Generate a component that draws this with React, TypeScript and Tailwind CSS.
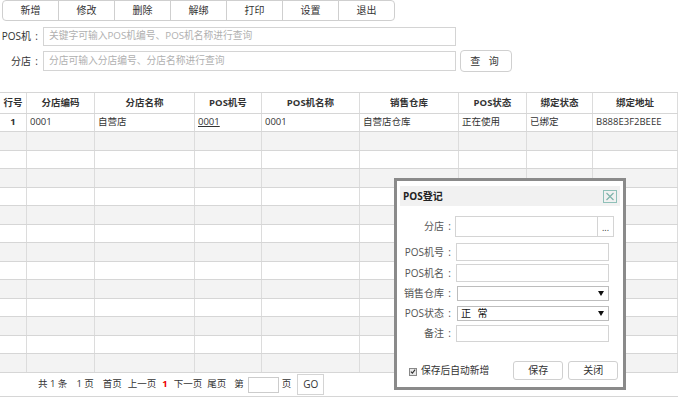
import React from 'react';

const FONT = '"Open Sans", "Noto Sans CJK SC", sans-serif';

const toolbar = ['新增', '修改', '删除', '解绑', '打印', '设置', '退出'];

const headers = ['行号', '分店编码', '分店名称', 'POS机号', 'POS机名称', '销售仓库', 'POS状态', '绑定状态', '绑定地址'];

const firstRow = ['0001', '自营店', '0001', '0001', '自营店仓库', '正在使用', '已绑定', 'B888E3F2BEEE'];

const rowHeights = Array.from({ length: 14 }, (_, i) => (i % 2 === 0 ? 18 : 19));

const GRID = 'grid grid-cols-[27px_68px_100px_67px_98px_99px_68px_66px_85px]';

// full-width colon, centred like the YaHei one in the picture
function Colon() {
  return <span className="inline-block w-[11px] text-center">:</span>;
}

function Arrow() {
  return (
    <svg width="6" height="5" viewBox="0 0 6 5" className="mr-[4px]">
      <path d="M0 0 H6 L3 5 Z" fill="#111" />
    </svg>
  );
}

function FormRow({ label, children, className }: { label: string; children: React.ReactNode; className: string }) {
  return (
    <div className={`flex items-center ${className}`}>
      <span className="w-[55px] text-right text-[#555] whitespace-nowrap">
        {label}
        <Colon />
      </span>
      {children}
    </div>
  );
}

export default function App() {
  return (
    <div className="relative w-[678px] h-[400px] overflow-hidden bg-white text-[10px] text-[#333]" style={{ fontFamily: FONT }}>
      {/* Toolbar */}
      <div className="flex pl-[2px] h-[21px]">
        {toolbar.map((t, i) => (
          <button
            key={t}
            className={`w-[57px] h-[21px] border border-[#cfcfcf] bg-white text-[10px] text-[#333] ${i > 0 ? '-ml-px' : 'rounded-l-[4px]'} ${i === toolbar.length - 1 ? 'rounded-r-[4px]' : ''}`}
          >
            {t}
          </button>
        ))}
      </div>

      {/* Search */}
      <div className="flex items-center mt-[6px] h-[19px]">
        <span className="w-[42px] text-right text-[#333] whitespace-nowrap">
          POS机<Colon />
        </span>
        <div className="ml-[1px] w-[413px] h-[19px] border border-[#d4d4d4] flex items-center pl-[5px] text-[9.75px] text-[#b0b0b0]">
          关键字可输入POS机编号、POS机名称进行查询
        </div>
      </div>
      <div className="flex items-center mt-[4px] h-[22px]">
        <span className="w-[42px] text-right text-[#333] whitespace-nowrap">
          分店<Colon />
        </span>
        <div className="ml-[1px] w-[413px] h-[20px] border border-[#d4d4d4] flex items-center pl-[5px] text-[9.75px] text-[#b0b0b0]">
          分店可输入分店编号、分店名称进行查询
        </div>
        <button className="ml-[4px] w-[52px] h-[22px] border border-[#d0d0d0] rounded-[4px] bg-white text-[10px] text-[#333] tracking-[3px]">
          查 询
        </button>
      </div>

      {/* Table */}
      <div className="mt-[20px] text-[9.5px]">
        <div className={`${GRID} h-[22px] border-t border-b border-[#d6d6d6] font-bold text-[#333]`}>
          {headers.map((h) => (
            <div key={h} className="flex items-center justify-center border-r border-[#dcdcdc]">
              {h}
            </div>
          ))}
        </div>
        {rowHeights.map((h, r) => (
          <div
            key={r}
            className={`${GRID} border-b border-[#d6d6d6] ${h === 18 ? 'h-[18px]' : 'h-[19px]'} ${r % 2 === 1 ? 'bg-[#f3f3f3]' : 'bg-white'}`}
          >
            {headers.map((_, c) => (
              <div
                key={c}
                className={`flex items-center border-r border-[#dcdcdc] ${c === 0 ? 'justify-center font-bold' : 'pl-[3px]'}`}
              >
                {r === 0 && (c === 0 ? '1' : c === 3 ? <span className="underline">{firstRow[c - 1]}</span> : firstRow[c - 1])}
              </div>
            ))}
          </div>
        ))}
      </div>

      {/* Pagination */}
      <div className="flex items-center h-[24px] border-b border-[#d6d6d6] pl-[38px] text-[9.5px] text-[#333] whitespace-nowrap">
        <span>共 1 条</span>
        <span className="ml-[9px]">1 页</span>
        <span className="ml-[9px]">首页</span>
        <span className="ml-[6px]">上一页</span>
        <span className="ml-[6px] text-[#e00] font-bold">1</span>
        <span className="ml-[6px]">下一页</span>
        <span className="ml-[5px]">尾页</span>
        <span className="ml-[8px]">第</span>
        <span className="ml-[4px] w-[31px] h-[16px] border border-[#ccc] bg-white" />
        <span className="ml-[3px]">页</span>
        <button className="ml-[6px] w-[27px] h-[21px] border border-[#d4d4d4] bg-white text-[10px] text-[#333]">GO</button>
      </div>

      {/* Modal: POS登记 */}
      <div className="absolute left-[394px] top-[178px] w-[232px] h-[212px] border-[3px] border-[#8a8a8a] bg-white pt-[5px] px-[3px]">
        <div className="flex items-center justify-between h-[20px] bg-[#f1f1f1] pl-[3px] pr-[3px]">
          <span className="font-bold text-[10px] text-[#222]">POS登记</span>
          <svg width="14" height="13" viewBox="0 0 14 13">
            <rect x="0.5" y="0.5" width="13" height="12" fill="none" stroke="#8fc0b8" />
            <path d="M3.5 3 L10.5 10 M10.5 3 L3.5 10" stroke="#7fb3aa" strokeWidth="1.2" />
          </svg>
        </div>

        <div className="mt-[10px] flex flex-col">
          <FormRow label="分店" className="h-[21px]">
            <div className="flex w-[159px] h-[21px] border border-[#d4d4d4]">
              <div className="flex-1" />
              <div className="w-[16px] border-l border-[#d4d4d4] flex items-end justify-center pb-[4px] text-[9px] leading-none">...</div>
            </div>
          </FormRow>
          <FormRow label="POS机号" className="h-[18px] mt-[6px]">
            <div className="ml-[1px] w-[153px] h-[18px] border border-[#d4d4d4]" />
          </FormRow>
          <FormRow label="POS机名" className="h-[18px] mt-[3px]">
            <div className="ml-[1px] w-[153px] h-[18px] border border-[#d4d4d4]" />
          </FormRow>
          <FormRow label="销售仓库" className="h-[15px] mt-[4px]">
            <div className="ml-[2px] w-[152px] h-[15px] border border-[#bdbdbd] flex items-center justify-end">
              <Arrow />
            </div>
          </FormRow>
          <FormRow label="POS状态" className="h-[15px] mt-[5px]">
            <div className="ml-[2px] w-[152px] h-[15px] border border-[#bdbdbd] flex items-center justify-between pl-[3px]">
              <span className="text-[10px] text-[#111] tracking-[2px]">正 常</span>
              <Arrow />
            </div>
          </FormRow>
          <FormRow label="备注" className="h-[17px] mt-[4px]">
            <div className="ml-[1px] w-[153px] h-[17px] border border-[#d4d4d4]" />
          </FormRow>
        </div>

        <div className="flex items-center mt-[19px] h-[19px]">
          <div className="flex items-center ml-[9px] mt-[2px]">
            <span className="w-[8px] h-[8px] border border-[#888] bg-[#e8e8e8] flex items-center justify-center">
              <svg width="7" height="7" viewBox="0 0 7 7">
                <path d="M1 3.6 L2.8 5.4 L6 1.4" fill="none" stroke="#333" strokeWidth="1.3" />
              </svg>
            </span>
            <span className="ml-[4px] text-[9.75px] text-[#333]">保存后自动新增</span>
          </div>
          <button className="ml-[24px] w-[50px] h-[19px] border border-[#d0d0d0] rounded-[3px] bg-white text-[10px] text-[#333]">保存</button>
          <button className="ml-[5px] w-[50px] h-[19px] border border-[#d0d0d0] rounded-[3px] bg-white text-[10px] text-[#333]">关闭</button>
        </div>
      </div>
    </div>
  );
}
